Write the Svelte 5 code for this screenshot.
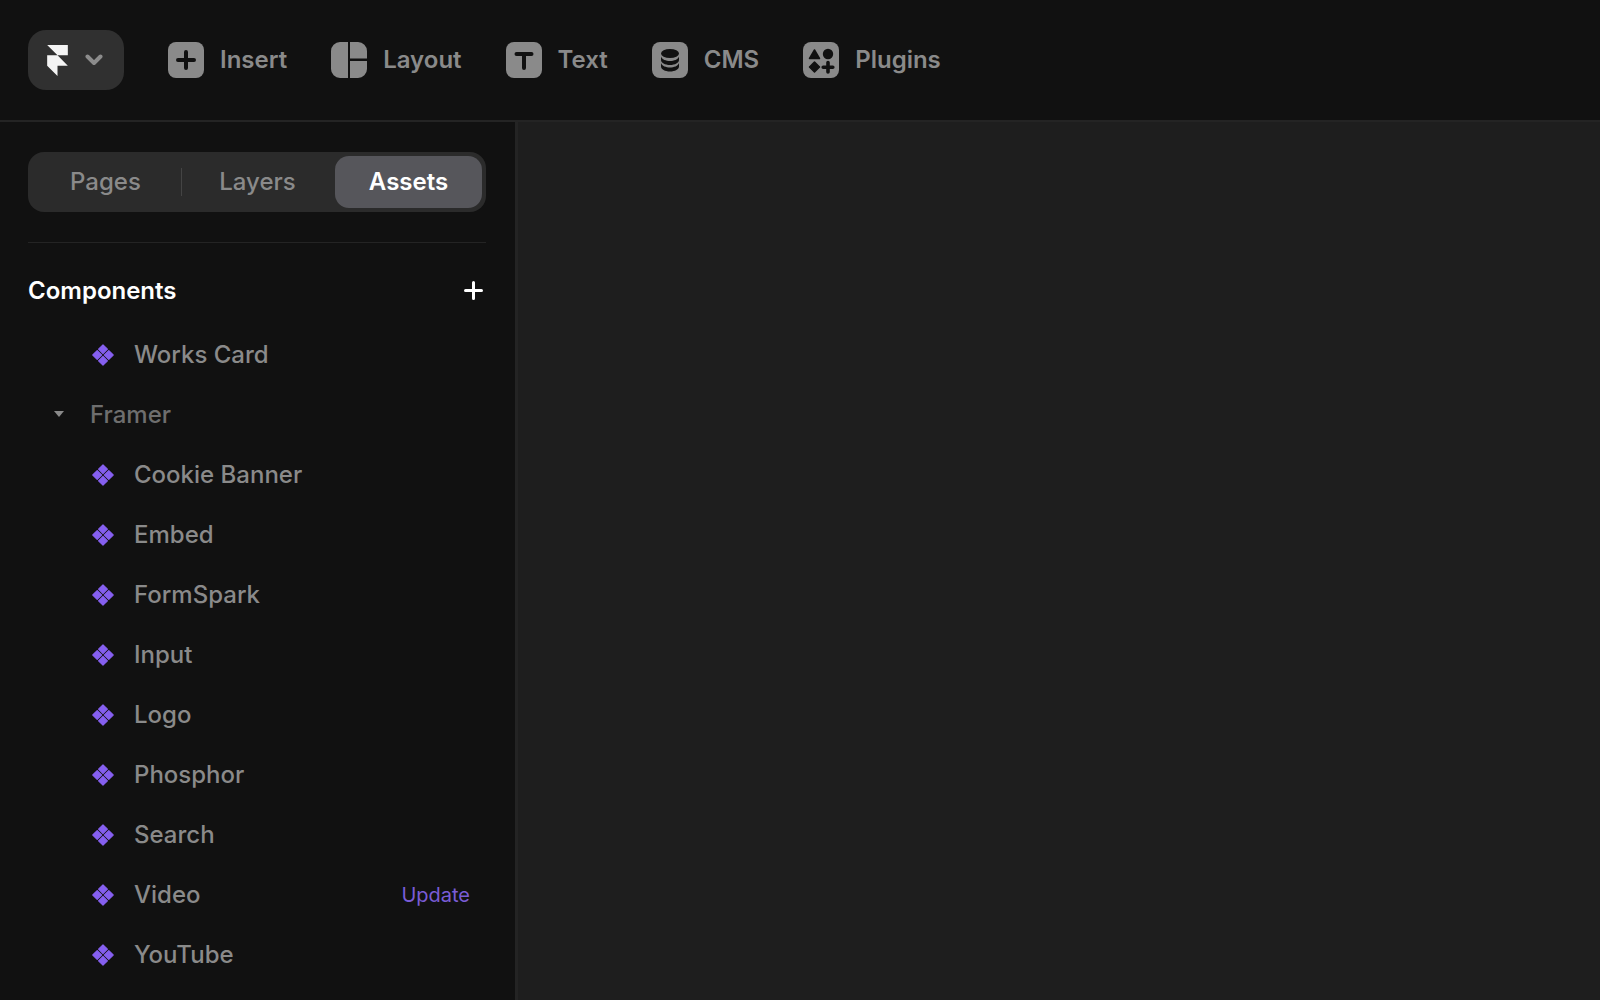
<script>
	const tools = ['Insert', 'Layout', 'Text', 'CMS', 'Plugins'];
	const rows = [
		{ name: 'Works Card' },
		{ name: 'Framer', group: true },
		{ name: 'Cookie Banner' },
		{ name: 'Embed' },
		{ name: 'FormSpark' },
		{ name: 'Input' },
		{ name: 'Logo' },
		{ name: 'Phosphor' },
		{ name: 'Search' },
		{ name: 'Video', update: true },
		{ name: 'YouTube' }
	];
</script>

<main class="app">
	<header class="topbar">
		<button class="logo">
			<svg width="21" height="31" viewBox="0 0 14 21"><path fill="#f4f4f4" d="M0 0h14v7H7zM0 7h7l7 7H7v7l-7-7z" /></svg>
			<svg width="18" height="12" viewBox="0 0 18 12"><path fill="none" stroke="#8c8c8c" stroke-width="4" stroke-linecap="round" stroke-linejoin="round" d="M2.500 2.500 9 9l6.500-6.500" /></svg>
		</button>
		{#each tools as tool}
			<div class="tool">
				<svg width="36" height="36" viewBox="0 0 36 36">
					{#if tool === 'Insert'}
						<rect width="36" height="36" rx="8" fill="#8a8a8a" />
						<path stroke="#111" stroke-width="4" stroke-linecap="round" d="M18 10v16M10 18h16" />
					{:else if tool === 'Layout'}
						<path fill="#8a8a8a" d="M9 0h8v36H9a9 9 0 0 1-9-9V9a9 9 0 0 1 9-9zM19 0h8a9 9 0 0 1 9 9v7.500H19zM19 19h17v8a9 9 0 0 1-9 9h-8z" />
					{:else if tool === 'Text'}
						<rect width="36" height="36" rx="8" fill="#8a8a8a" />
						<path fill="none" stroke="#111" stroke-width="4" stroke-linecap="round" d="M10.500 12h15M18 12v14" />
					{:else if tool === 'CMS'}
						<rect width="36" height="36" rx="8" fill="#8a8a8a" />
						<ellipse cx="18" cy="11.500" rx="9" ry="4.500" fill="#111" />
						<path fill="#111" d="M9 14.500c1 3 5 4.500 9 4.500s8-1.500 9-4.500V18c0 2.800-4 5-9 5s-9-2.200-9-5z" />
						<path fill="#111" d="M9 21c1 3 5 4.500 9 4.500s8-1.500 9-4.500v3.500c0 2.800-4 5-9 5s-9-2.200-9-5z" />
					{:else}
						<rect width="36" height="36" rx="8" fill="#8a8a8a" />
						<path fill="#111" stroke="#111" stroke-width="1.500" stroke-linejoin="round" d="M11.500 8l5 8.500h-10z" />
						<circle cx="25" cy="12" r="5.200" fill="#111" />
						<path fill="#111" stroke="#111" stroke-width="1.500" stroke-linejoin="round" d="M11.500 20l5 5-5 5-5-5z" />
						<path stroke="#111" stroke-width="3.600" stroke-linecap="round" d="M25 20.500v9.500M20.200 25.200h9.600" />
					{/if}
				</svg>
				<span>{tool}</span>
			</div>
		{/each}
	</header>

	<div class="body">
		<aside class="sidebar">
			<div class="tabs">
				<div class="tab first"><span>Pages</span></div>
				<div class="tab"><span>Layers</span></div>
				<div class="tab active"><span>Assets</span></div>
			</div>
			<hr />
			<div class="section">
				<span>Components</span>
				<svg width="19" height="19" viewBox="0 0 19 19"><path stroke="#fff" stroke-width="3" stroke-linecap="round" d="M9.500 1.500v16M1.500 9.500h16" /></svg>
			</div>
			<ul>
				{#each rows as row}
					{#if row.group}
						<li class="row group">
							<svg width="10" height="6" viewBox="0 0 10 6"><path fill="#8a8a8a" d="M0 0h10L5 6z" /></svg>
							<span>{row.name}</span>
						</li>
					{:else}
						<li class="row">
							<svg class="comp" width="24" height="24" viewBox="0 0 24 24">
								<path fill="#8660f0" stroke="#8660f0" stroke-width="1.200" stroke-linejoin="round" d="M12 1.800l4.400 4.400-4.400 4.400-4.400-4.400zM6.200 7.600l4.400 4.400-4.400 4.400-4.400-4.400zM17.800 7.600l4.400 4.400-4.400 4.400-4.400-4.400zM12 13.400l4.400 4.400-4.400 4.400-4.400-4.400z" />
							</svg>
							<span class="name">{row.name}</span>
							{#if row.update}<span class="update">Update</span>{/if}
						</li>
					{/if}
				{/each}
			</ul>
		</aside>
		<div class="canvas"></div>
	</div>
</main>

<style>
	:global(body) {
		background: #111;
	}
	.app {
		width: 1600px;
		height: 1000px;
		overflow: hidden;
		display: flex;
		flex-direction: column;
		background: #111;
		font-family: Inter, "Liberation Sans", sans-serif;
	}
	.topbar {
		height: 120px;
		flex: none;
		display: flex;
		align-items: center;
		gap: 44px;
		padding-left: 28px;
		border-bottom: 2px solid #242424;
	}
	.logo {
		width: 96px;
		height: 60px;
		border: none;
		border-radius: 18px;
		background: #303030;
		display: flex;
		align-items: center;
		justify-content: center;
		gap: 17px;
		padding: 0 2px 0 0;
	}
	.tool {
		display: flex;
		align-items: center;
		gap: 16px;
		color: #8a8a8a;
		font-size: 24px;
		font-weight: 600;
	}
	.tool span {
		margin-bottom: 2px;
	}
	.body {
		flex: 1;
		display: flex;
		min-height: 0;
	}
	.sidebar {
		width: 518px;
		flex: none;
		box-sizing: border-box;
		padding: 30px 29px 0 28px;
		border-right: 3px solid #242424;
	}
	.tabs {
		height: 60px;
		box-sizing: border-box;
		padding: 4px 4px 4px 3px;
		display: flex;
		gap: 3px;
		border-radius: 16px;
		background: #2b2b2b;
		font-size: 24px;
		font-weight: 500;
		color: #8a8a8a;
	}
	.tab {
		flex: 1;
		position: relative;
		display: flex;
		align-items: center;
		justify-content: center;
		border-radius: 14px;
	}
	.tab span {
		margin-bottom: 2px;
	}
	.tab.first::after {
		content: "";
		position: absolute;
		right: -2px;
		top: 12px;
		bottom: 12px;
		width: 1px;
		background: #444;
	}
	.tab.active {
		flex: none;
		width: 147px;
		background: #56565b;
		color: #fff;
		font-weight: 600;
	}
	hr {
		border: none;
		height: 1px;
		background: #242424;
		margin: 30px 0 0;
	}
	.section {
		height: 60px;
		margin-top: 18px;
		display: flex;
		align-items: center;
		justify-content: space-between;
		color: #fff;
		font-size: 24px;
		font-weight: 600;
	}
	.section span {
		margin-bottom: 2px;
	}
	.section svg {
		margin: 0 3px 1px 0;
	}
	ul {
		list-style: none;
		margin: 3px 0 0;
		padding: 0;
	}
	.row {
		height: 60px;
		display: flex;
		align-items: center;
		padding: 0 16px 0 63px;
		font-size: 24px;
		font-weight: 500;
		color: #8a8a8a;
	}
	.comp {
		margin-top: 2px;
	}
	.row .name {
		margin-left: 19px;
		flex: 1;
	}
	.group {
		padding-left: 26px;
		color: #6e6e6e;
	}
	.group span {
		margin-left: 26px;
	}
	.update {
		margin-top: 2px;
		font-size: 20px;
		font-weight: 400;
		color: #7a5cd6;
	}
	.canvas {
		flex: 1;
		background: #1e1e1e;
	}
</style>
